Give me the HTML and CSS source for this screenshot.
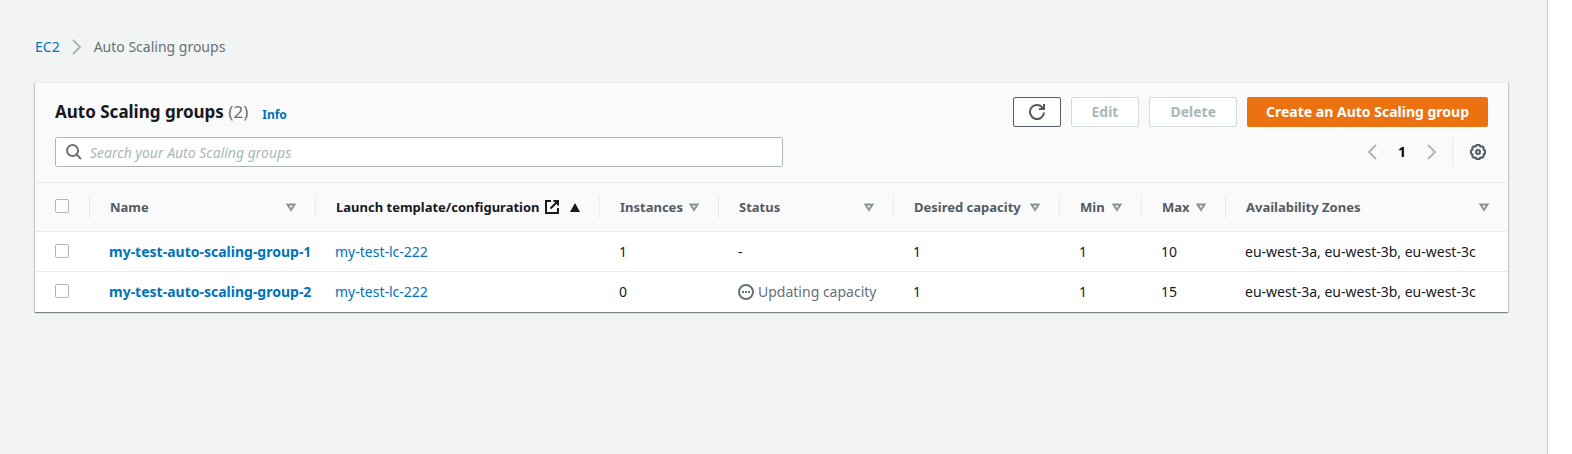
FILE: index.html
```html
<!DOCTYPE html>
<html lang="en">
<head>
<meta charset="utf-8">
<title>Auto Scaling groups</title>
<link rel="stylesheet" href="styles.css">
</head>
<body>
<svg class="sprite" aria-hidden="true">
  <symbol id="sort" viewBox="0 0 10 9"><path d="M1.5 1.5h7L5 7z" fill="none" stroke="currentColor" stroke-width="2"/></symbol>
  <symbol id="sort-asc" viewBox="0 0 10 9"><path d="M0 9L5 0l5 9z" fill="currentColor"/></symbol>
  <symbol id="chevron" viewBox="0 0 10 16"><path d="M1 1l7 7-7 7" fill="none" stroke="currentColor" stroke-width="2"/></symbol>
</svg>
<main class="content">
  <nav class="breadcrumb" aria-label="Breadcrumb">
    <a href="#">EC2</a>
    <svg class="chevron" aria-hidden="true"><use href="#chevron"/></svg>
    <span>Auto Scaling groups</span>
  </nav>
  <section class="panel">
    <header class="panel-head">
      <div class="title-row">
        <h1 class="title">Auto Scaling groups <span class="count">(2)</span></h1>
        <a class="info" href="#">Info</a>
        <div class="actions">
          <button class="btn btn-refresh" type="button" aria-label="Refresh">
            <svg class="icon" viewBox="0 0 16 16" aria-hidden="true"><path d="M15 8.500A7 7 0 1 1 13 3.100L14.500 4.700" fill="none" stroke="currentColor" stroke-width="2"/><path d="M15 0v5H10" fill="none" stroke="currentColor" stroke-width="2"/></svg>
          </button>
          <button class="btn" type="button" disabled>Edit</button>
          <button class="btn" type="button" disabled>Delete</button>
          <button class="btn btn-primary" type="button">Create an Auto Scaling group</button>
        </div>
      </div>
      <div class="filter-row">
        <label class="search">
          <svg class="icon" viewBox="0 0 16 16" aria-hidden="true"><circle cx="6.500" cy="6.500" r="5.500" fill="none" stroke="currentColor" stroke-width="2"/><path d="M10.500 10.500l4.500 4.500" stroke="currentColor" stroke-width="2"/></svg>
          <input type="search" placeholder="Search your Auto Scaling groups" aria-label="Search your Auto Scaling groups">
        </label>
        <div class="pager">
          <button class="page-btn" type="button" aria-label="Previous page" disabled><svg class="chevron prev" aria-hidden="true"><use href="#chevron"/></svg></button>
          <button class="page-btn page-num" type="button">1</button>
          <button class="page-btn" type="button" aria-label="Next page" disabled><svg class="chevron" aria-hidden="true"><use href="#chevron"/></svg></button>
          <div class="settings">
            <button class="page-btn gear" type="button" aria-label="Preferences">
              <svg class="icon" viewBox="0 0 16 16" aria-hidden="true"><path d="M6.500 1h3l.8 1.500 1.900-.2 1.500 1.500-.2 1.900 1.500.8v3l-1.500.8.2 1.900-1.500 1.500-1.900-.2-.8 1.500h-3l-.8-1.500-1.900.2-1.500-1.500.2-1.900L1 9.500v-3l1.500-.8-.2-1.900 1.500-1.500 1.900.2z" fill="none" stroke="currentColor" stroke-width="2" stroke-linejoin="round"/><circle cx="8" cy="8" r="2" fill="none" stroke="currentColor" stroke-width="2"/></svg>
            </button>
          </div>
        </div>
      </div>
    </header>
    <table class="groups">
      <colgroup>
        <col class="c-check"><col class="c-name"><col class="c-launch"><col class="c-inst"><col class="c-status"><col class="c-desired"><col class="c-min"><col class="c-max"><col>
      </colgroup>
      <thead>
        <tr>
          <th scope="col"><div class="head check"><input type="checkbox" aria-label="Select all groups"></div></th>
          <th scope="col"><div class="head">Name<svg class="sort" aria-hidden="true"><use href="#sort"/></svg></div></th>
          <th scope="col" aria-sort="ascending"><div class="head sorted">Launch template/configuration
            <svg class="external" viewBox="0 0 14 14" aria-hidden="true"><path d="M6 1H1v12h12V8M8.500 1H13v4.500M13 1L5.500 8.500" fill="none" stroke="currentColor" stroke-width="2"/></svg>
            <svg class="sort" aria-hidden="true"><use href="#sort-asc"/></svg></div></th>
          <th scope="col"><div class="head">Instances<svg class="sort" aria-hidden="true"><use href="#sort"/></svg></div></th>
          <th scope="col"><div class="head">Status<svg class="sort" aria-hidden="true"><use href="#sort"/></svg></div></th>
          <th scope="col"><div class="head">Desired capacity<svg class="sort" aria-hidden="true"><use href="#sort"/></svg></div></th>
          <th scope="col"><div class="head">Min<svg class="sort" aria-hidden="true"><use href="#sort"/></svg></div></th>
          <th scope="col"><div class="head">Max<svg class="sort" aria-hidden="true"><use href="#sort"/></svg></div></th>
          <th scope="col"><div class="head last">Availability Zones<svg class="sort" aria-hidden="true"><use href="#sort"/></svg></div></th>
        </tr>
      </thead>
      <tbody>
        <tr>
          <td class="check"><input type="checkbox" aria-label="Select my-test-auto-scaling-group-1"></td>
          <td><a class="name" href="#">my-test-auto-scaling-group-1</a></td>
          <td><a href="#">my-test-lc-222</a></td>
          <td>1</td>
          <td>-</td>
          <td>1</td>
          <td>1</td>
          <td>10</td>
          <td>eu-west-3a, eu-west-3b, eu-west-3c</td>
        </tr>
        <tr>
          <td class="check"><input type="checkbox" aria-label="Select my-test-auto-scaling-group-2"></td>
          <td><a class="name" href="#">my-test-auto-scaling-group-2</a></td>
          <td><a href="#">my-test-lc-222</a></td>
          <td>0</td>
          <td><span class="status"><svg class="icon" viewBox="0 0 16 16" aria-hidden="true"><circle cx="8" cy="8" r="7" fill="none" stroke="currentColor" stroke-width="2"/><path d="M4 7h2v2H4zM7 7h2v2H7zM10 7h2v2h-2z" fill="currentColor"/></svg>Updating capacity</span></td>
          <td>1</td>
          <td>1</td>
          <td>15</td>
          <td>eu-west-3a, eu-west-3b, eu-west-3c</td>
        </tr>
      </tbody>
    </table>
  </section>
</main>
</body>
</html>
```
FILE: styles.css
```css
* { box-sizing: border-box; }
body {
  margin: 0;
  background: #fff;
  color: #16191f;
  font: 14px/20px "Noto Sans", "Open Sans", sans-serif;
}
button, input { font: inherit; margin: 0; }
a { color: #0073bb; text-decoration: none; }
svg { display: block; flex: none; }
.sprite { display: none; }
.icon { width: 16px; height: 16px; }
.content {
  min-height: 100vh;
  margin-right: 24px;
  padding: 37px 39px 40px 35px;
  background: #f2f4f4;
  border-right: 1px solid #c8cccc;
}
.chevron { width: 10px; height: 16px; color: #aab7b8; }
.prev { transform: rotate(180deg); }
.breadcrumb {
  display: flex;
  align-items: center;
  gap: 12px;
  margin-bottom: 25px;
  color: #687078;
}
.panel {
  background: #fff;
  border-top: 1px solid #eaeded;
  box-shadow: 0 1px 1px 0 rgba(0, 28, 36, .3), 1px 1px 1px 0 rgba(0, 28, 36, .15), -1px 1px 1px 0 rgba(0, 28, 36, .15);
}
.panel-head {
  padding: 14px 20px 15px;
  background: #fafafa;
  border-bottom: 1px solid #eaeded;
}
.title-row { display: flex; align-items: center; margin-bottom: 10px; }
.title { margin: 0; font-size: 17px; line-height: 30px; }
.count { font-weight: 400; color: #687078; }
.info { margin-left: 14px; padding-top: 6px; font-size: 12px; font-weight: 700; }
.actions { display: flex; gap: 10px; margin-left: auto; }
.btn {
  height: 30px;
  padding: 0 20px;
  border: 1px solid #545b64;
  border-radius: 2px;
  background: #fff;
  color: #545b64;
  font-weight: 700;
}
.btn:disabled { border-color: #d5dbdb; color: #aab7b8; }
.btn-refresh { padding: 0 15px; }
.btn-primary { padding: 0 18px; border-color: #ec7211; background: #ec7211; color: #fff; }
.filter-row { display: flex; justify-content: space-between; gap: 20px; }
.search {
  display: flex;
  align-items: center;
  flex: 0 1 728px;
  gap: 8px;
  height: 30px;
  padding: 0 10px;
  border: 1px solid #aab7b8;
  border-radius: 2px;
  background: #fff;
  color: #687078;
}
.search input { flex: 1; padding: 2px 0 0; border: 0; outline: 0; background: none; }
.search input::placeholder { color: #aab7b8; font-style: italic; opacity: 1; }
.pager { display: flex; align-items: center; gap: 10px; }
.page-btn {
  display: grid;
  place-items: center;
  width: 20px;
  height: 30px;
  padding: 0;
  border: 0;
  background: none;
}
.page-num { font-weight: 700; }
.settings { padding-left: 15px; border-left: 1px solid #eaeded; }
.gear { color: #545b64; }
.groups { width: 100%; border-collapse: collapse; table-layout: fixed; }
.c-check { width: 55px; }
.c-name { width: 226px; }
.c-launch { width: 284px; }
.c-inst { width: 119px; }
.c-status { width: 175px; }
.c-desired { width: 166px; }
.c-min { width: 82px; }
.c-max { width: 84px; }
.groups th { padding: 12px 0; font-size: 13px; background: #fafafa; border-bottom: 1px solid #eaeded; text-align: left; }
.groups td { height: 40px; padding: 1px 0 0 19px; border-bottom: 1px solid #eaeded; white-space: nowrap; }
.groups tr:last-child td { border-bottom: 0; }
.head {
  display: flex;
  align-items: center;
  gap: 5px;
  height: 24px;
  padding: 0 19px 0 20px;
  border-right: 1px solid #eaeded;
  color: #545b64;
  white-space: nowrap;
}
.sorted { color: #16191f; }
.last { border-right: 0; }
.sort { width: 10px; height: 9px; margin-left: auto; color: #879596; }
.sorted .sort { color: #16191f; }
.external { width: 14px; height: 14px; }
.name { font-weight: 700; }
.status { display: flex; align-items: center; gap: 4px; color: #687078; }
input[type="checkbox"] {
  display: block;
  appearance: none;
  width: 14px;
  height: 14px;
  margin-bottom: 2px;
  border: 1px solid #aab7b8;
  border-radius: 2px;
  background: #fff;
}
.groups .check { padding-top: 0; padding-left: 20px; }
```
